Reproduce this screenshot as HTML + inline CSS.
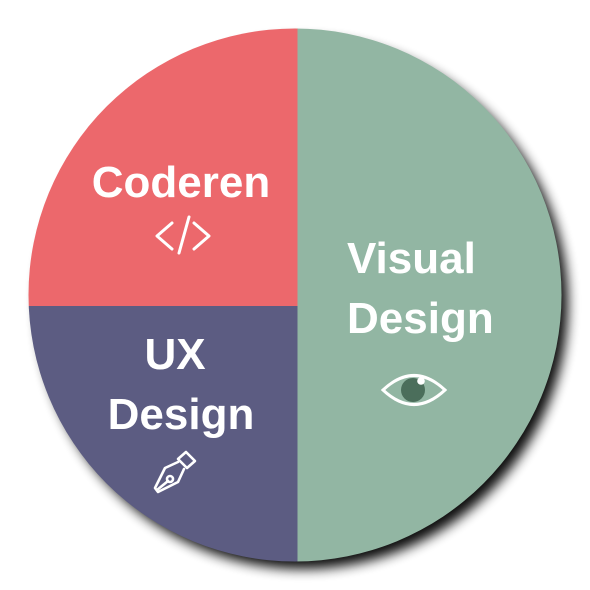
<!DOCTYPE html>
<html><head><style>
html,body{margin:0;padding:0;background:#fff;width:590px;height:590px;overflow:hidden}
svg{display:block}
text{font-family:"Liberation Sans",Arial,sans-serif;font-weight:bold;fill:#fff}
</style></head><body>
<svg width="590" height="590" viewBox="0 0 590 590">
<defs>
<filter id="sh" x="-20%" y="-20%" width="140%" height="140%">
<feGaussianBlur stdDeviation="6"/>
</filter>
<clipPath id="c"><circle cx="295" cy="295" r="266.5"/></clipPath>
</defs>
<circle cx="303" cy="304" r="265" fill="#000" opacity="0.95" filter="url(#sh)"/>
<g clip-path="url(#c)">
<rect x="0" y="0" width="298" height="306" fill="#EC686C"/>
<rect x="0" y="306" width="298" height="290" fill="#5C5C82"/>
<rect x="297.5" y="0" width="300" height="590" fill="#92B6A3"/>
</g>
<text x="181" y="197" font-size="44" text-anchor="middle">Coderen</text>
<g stroke="#fff" stroke-width="3" fill="none" stroke-linecap="round" stroke-linejoin="round">
<polyline points="172,223 157,236 172,249"/>
<polyline points="194,223 209,236 194,249"/>
<line x1="189" y1="217" x2="179" y2="253"/>
</g>
<text x="347" y="273" font-size="44">Visual</text>
<text x="347" y="333" font-size="44">Design</text>
<text x="175" y="369" font-size="44" text-anchor="middle">UX</text>
<text x="181" y="429" font-size="44" text-anchor="middle">Design</text>
<path d="M383,390 Q414,361 445,390 Q414,419 383,390 Z" fill="none" stroke="#fff" stroke-width="3"/>
<circle cx="413" cy="390" r="12" fill="#4B6E5B"/>
<circle cx="421" cy="381" r="3.8" fill="#fff"/>
<g stroke="#fff" stroke-width="2.6" fill="none" stroke-linejoin="round" stroke-linecap="round">
<path d="M178,459 L186,452 L195,461 L187,468 Z"/>
<path d="M178,462 L165,468 L155,488 L158,492 L178,482 L184,469"/>
<circle cx="170" cy="479" r="3"/>
<line x1="168" y1="481" x2="157" y2="490"/>
</g>
</svg>
</body></html>
